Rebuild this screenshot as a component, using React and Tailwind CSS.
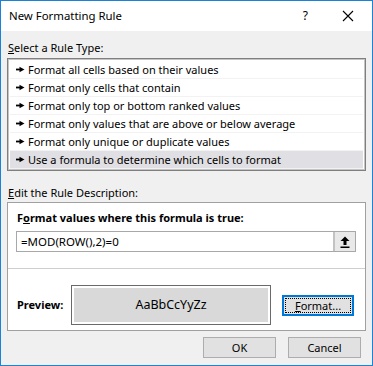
import React, { useState } from "react";

const ruleTypes = [
  "Format all cells based on their values",
  "Format only cells that contain",
  "Format only top or bottom ranked values",
  "Format only values that are above or below average",
  "Format only unique or duplicate values",
  "Use a formula to determine which cells to format",
];

function Pointer() {
  return (
    <svg width="9" height="7" viewBox="0 0 9 7" className="shrink-0">
      <rect x="0" y="2.6" width="4.5" height="1.8" fill="#000" />
      <polygon points="3.5,0.8 8.5,3.5 3.5,6.2" fill="#000" />
    </svg>
  );
}

function CollapseIcon() {
  return (
    <svg width="10" height="12" viewBox="0 0 10 12">
      <polygon points="5,0.5 9.5,5 6.5,5 6.5,9 3.5,9 3.5,5 0.5,5" fill="#000" />
      <rect x="0.5" y="10.5" width="9" height="1.5" fill="#000" />
    </svg>
  );
}

export default function App() {
  const [selected, setSelected] = useState(5);
  const [formula, setFormula] = useState("=MOD(ROW(),2)=0");

  return (
    <div
      className="w-[373px] h-[366px] border border-[#1883d7] bg-[#f0f0f0] flex flex-col text-[11px] text-black overflow-hidden"
      style={{ fontFamily: '"Noto Sans", "Open Sans", sans-serif' }}
    >
      {/* Title bar */}
      <div className="h-[30px] bg-white flex items-center shrink-0">
        <span className="ml-[8px] text-[11.4px]">New Formatting Rule</span>
        <span className="ml-auto mr-[34px] text-[12px]">?</span>
        <svg width="12" height="12" viewBox="0 0 12 12" className="mr-[18px]">
          <path d="M1 1 L11 11 M11 1 L1 11" stroke="#000" strokeWidth="1.1" />
        </svg>
      </div>

      <div className="flex-1 flex flex-col pl-[6px] pr-[6px]">
        {/* Rule type */}
        <div className="mt-[10px] h-[14px] leading-[14px] ml-[1px]">
          <span className="underline">S</span>elect a Rule Type:
        </div>
        <div className="mt-[3px] bg-white border border-[#7f7f7f] outline outline-1 outline-[#c4c4c4] -outline-offset-2 pt-[2px] pb-[1px] px-[2px]">
          {ruleTypes.map((t, i) => (
            <div
              key={t}
              onClick={() => setSelected(i)}
              className={`h-[18px] flex items-center gap-[3px] pl-[6px] border-b border-[#f2f2f2] ${
                selected === i ? "bg-[#e0dfe3]" : ""
              }`}
            >
              <Pointer />
              <span className="leading-[18px]">{t}</span>
            </div>
          ))}
        </div>

        {/* Description */}
        <div className="mt-[15px] h-[14px] leading-[14px] ml-[1px]">
          <span className="underline">E</span>dit the Rule Description:
        </div>
        <div className="mt-[2px] h-[129px] bg-white border border-[#a0a0a0] flex flex-col">
          <div className="mt-[8px] ml-[9px] h-[14px] leading-[14px] font-bold">
            F<span className="underline">o</span>rmat values where this formula is true:
          </div>
          <div className="mt-[6px] ml-[8px] mr-[9px] h-[21px] border border-[#a8a8a8] flex items-stretch">
            <input
              value={formula}
              onChange={(e) => setFormula(e.target.value)}
              className="flex-1 min-w-0 px-[4px] text-[11.5px] outline-none bg-white"
              style={{ fontFamily: '"Noto Sans", sans-serif' }}
            />
            <button className="w-[22px] bg-[#e9e9e9] border-l-2 border-[#c3c3c3] flex items-center justify-center">
              <CollapseIcon />
            </button>
          </div>
          <div className="mt-[16px] border-t border-[#cfcfcf]" />
          <div className="flex items-center mt-[16px]">
            <span className="ml-[9px] w-[54px] font-bold">Preview:</span>
            <div className="w-[200px] h-[40px] border border-[#6a6a6a] p-[2px] bg-white">
              <div className="w-full h-full bg-[#d9d9d9] flex items-center justify-center text-[12.5px]">
                AaBbCcYyZz
              </div>
            </div>
            <button className="ml-[11px] w-[72px] h-[21px] border-2 border-[#0078d7] bg-[#e1e1e1] p-[1px]">
              <div className="w-full h-full border border-dotted border-black flex items-center justify-center leading-none">
                <span className="underline">F</span>ormat...
              </div>
            </button>
          </div>
        </div>

        {/* Footer buttons */}
        <div className="flex justify-end gap-[12px] mt-[6px] mr-[5px]">
          <button className="w-[73px] h-[21px] bg-[#e1e1e1] border border-[#adadad] leading-none">
            OK
          </button>
          <button className="w-[73px] h-[21px] bg-[#e1e1e1] border border-[#adadad] leading-none">
            Cancel
          </button>
        </div>
      </div>
    </div>
  );
}
